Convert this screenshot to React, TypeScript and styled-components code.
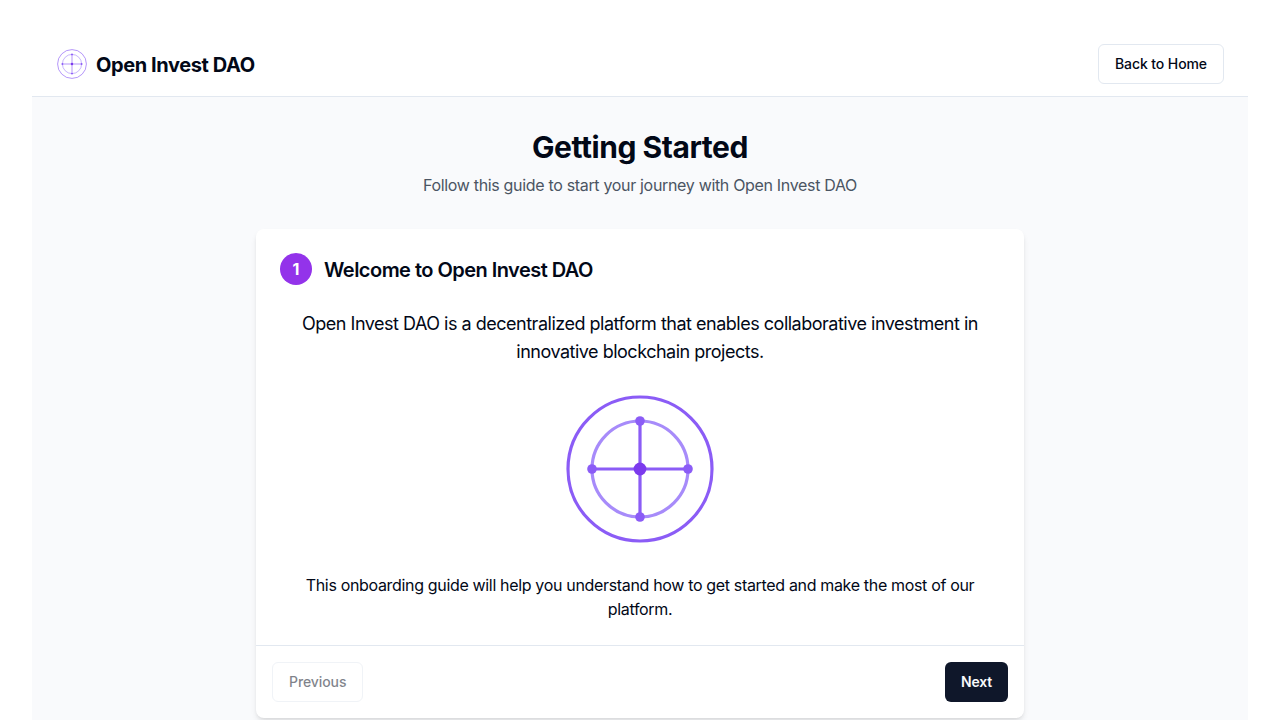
import React from "react";
import styled, { createGlobalStyle } from "styled-components";

const GlobalStyle = createGlobalStyle`
  *, *::before, *::after { box-sizing: border-box; }
  html { background: #fff; }
  body {
    margin: 0;
    padding: 32px 32px 0;
    height: 720px;
    overflow: hidden;
    color: #020817;
    font: 16px/24px Inter, "Liberation Sans", sans-serif;
  }
  h1, h2, p { margin: 0; }
`;

const Page = styled.div`
  min-height: 720px;
  background: #f9fafc;
`;

const Header = styled.header`
  display: flex;
  align-items: center;
  justify-content: space-between;
  height: 65px;
  padding: 0 24px;
  background: #fff;
  border-bottom: 1px solid #e2e8f0;
`;

const Brand = styled.div`
  display: flex;
  align-items: center;
  gap: 8px;
`;

const BrandName = styled.span`
  padding-top: 2px;
  font-size: 20px;
  line-height: 28px;
  font-weight: 700;
  letter-spacing: -0.4px;
`;

const Button = styled.button<{ $primary?: boolean }>`
  height: 40px;
  padding: 0 16px;
  border: ${(p) => (p.$primary ? "0" : "1px solid #e2e8f0")};
  border-radius: 6px;
  background: ${(p) => (p.$primary ? "#0f172a" : "#fff")};
  color: ${(p) => (p.$primary ? "#f8fafc" : "#020817")};
  font: ${(p) => (p.$primary ? 600 : 500)} 14px/20px Inter, "Liberation Sans", sans-serif;
  letter-spacing: ${(p) => (p.$primary ? "-0.2px" : "-0.09px")};
  &:disabled { opacity: 0.5; }
`;

const Main = styled.main`
  width: 768px;
  margin: 0 auto;
  padding-top: 32px;
`;

const Intro = styled.div`
  text-align: center;
  margin-bottom: 32px;
`;

const Title = styled.h1`
  font-size: 30px;
  line-height: 36px;
  font-weight: 700;
  letter-spacing: -0.44px;
  margin-bottom: 8px;
`;

const Subtitle = styled.p`
  color: #4b5563;
  letter-spacing: -0.325px;
`;

const Card = styled.section`
  background: #fff;
  border-radius: 8px;
  box-shadow: 0 4px 6px -1px rgb(0 0 0 / 0.1), 0 2px 4px -2px rgb(0 0 0 / 0.1);
`;

const CardBody = styled.div`
  padding: 24px;
`;

const StepHeading = styled.div`
  display: flex;
  align-items: center;
  gap: 12px;
  margin-bottom: 24px;
`;

const StepNumber = styled.span`
  display: grid;
  place-items: center;
  width: 32px;
  height: 32px;
  border-radius: 50%;
  background: #9333ea;
  color: #fff;
  font-weight: 700;
`;

const StepTitle = styled.h2`
  padding-top: 2px;
  font-size: 20px;
  line-height: 28px;
  font-weight: 600;
  letter-spacing: -0.53px;
`;

const StepContent = styled.div`
  display: flex;
  flex-direction: column;
  align-items: center;
  gap: 24px;
  text-align: center;
`;

const Lead = styled.p`
  padding: 1px 16px 0;
  margin-bottom: -1px;
  font-size: 18px;
  line-height: 28px;
  letter-spacing: -0.49px;
`;

const Note = styled.p`
  padding: 0 16px;
  letter-spacing: -0.335px;
`;

const CardFooter = styled.footer`
  display: flex;
  justify-content: space-between;
  padding: 16px;
  border-top: 1px solid #e2e8f0;
`;

function Logo({ size }: { size: number }) {
  return (
    <svg width={size} height={size} viewBox="0 0 100 100" fill="none">
      <circle cx="50" cy="50" r="45" stroke="#8b5cf6" strokeWidth="2" />
      <circle cx="50" cy="50" r="30" stroke="#a78bfa" strokeWidth="2" />
      <path d="M50 20V80M20 50H80" stroke="#8b5cf6" strokeWidth="2" />
      <circle cx="50" cy="50" r="4" fill="#7c3aed" />
      <circle cx="50" cy="20" r="3" fill="#8b5cf6" />
      <circle cx="80" cy="50" r="3" fill="#8b5cf6" />
      <circle cx="50" cy="80" r="3" fill="#8b5cf6" />
      <circle cx="20" cy="50" r="3" fill="#8b5cf6" />
    </svg>
  );
}

export default function App() {
  return (
    <>
      <GlobalStyle />
      <Page>
        <Header>
          <Brand>
            <Logo size={32} />
            <BrandName>Open Invest DAO</BrandName>
          </Brand>
          <Button>Back to Home</Button>
        </Header>
        <Main>
          <Intro>
            <Title>Getting Started</Title>
            <Subtitle>Follow this guide to start your journey with Open Invest DAO</Subtitle>
          </Intro>
          <Card>
            <CardBody>
              <StepHeading>
                <StepNumber>1</StepNumber>
                <StepTitle>Welcome to Open Invest DAO</StepTitle>
              </StepHeading>
              <StepContent>
                <Lead>
                  Open Invest DAO is a decentralized platform that enables collaborative investment in
                  innovative blockchain projects.
                </Lead>
                <Logo size={160} />
                <Note>
                  This onboarding guide will help you understand how to get started and make the most of our
                  platform.
                </Note>
              </StepContent>
            </CardBody>
            <CardFooter>
              <Button disabled>Previous</Button>
              <Button $primary>Next</Button>
            </CardFooter>
          </Card>
        </Main>
      </Page>
    </>
  );
}
